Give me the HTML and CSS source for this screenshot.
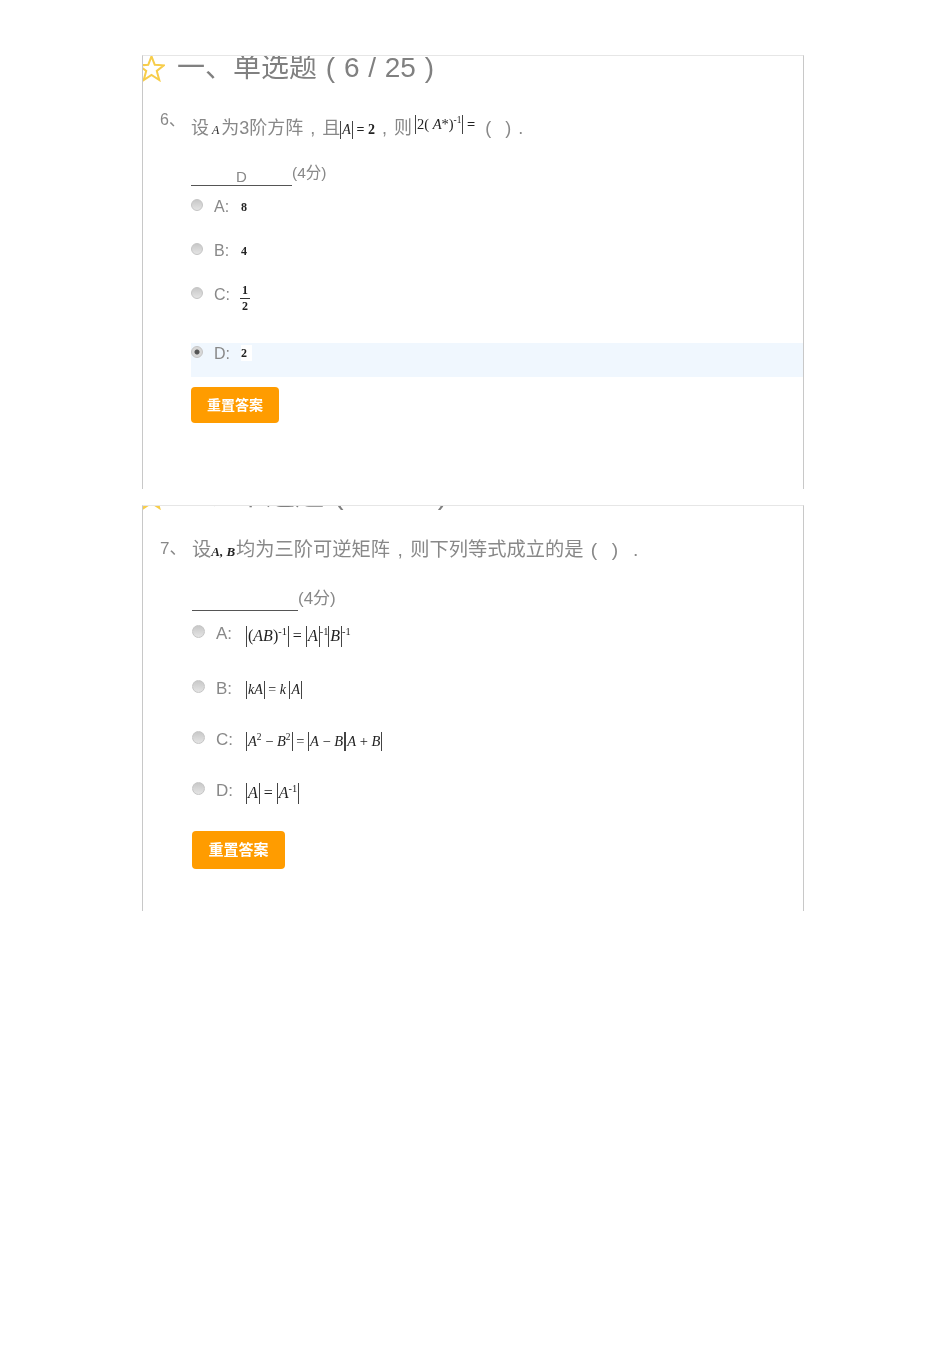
FILE: index.html
```html
<!DOCTYPE html>
<html lang="zh-CN">
<head>
    <meta charset="UTF-8">
    <title>单选题</title>
    <link rel="stylesheet" href="styles.css">
</head>
<body>
    <div class="page">
        <div class="panel first">
            <h2 class="title">
                <svg class="star" viewBox="0 0 24 24"><path d="M12 1.2l2.9 7.5 8.1.5-6.3 5 2.2 8-6.9-4.5-6.9 4.5 2.2-8-6.3-5 8.1-.5z"/></svg>
                <span>一、单选题 ( 6 / 25 )</span>
            </h2>
            <div class="question">
                <span class="num">6、</span>
                <p class="stem">设<i class="m a-var">A</i>为3阶方阵 , 且<span class="m formula"><span class="abs"><i>A</i></span> = 2</span> , 则<span class="m formula raised"><span class="abs">2( <i>A</i>*)<sup>-1</sup></span> =</span> ( &nbsp;) .</p>
            </div>
            <div class="answer"><span class="blank">D</span><span class="score">(4分)</span></div>
            <div class="options">
                <div class="option"><span class="radio"></span><span class="label">A:</span><span class="m value">8</span></div>
                <div class="option"><span class="radio"></span><span class="label">B:</span><span class="m value">4</span></div>
                <div class="option tall"><span class="radio"></span><span class="label">C:</span><span class="m frac"><span>1</span><span>2</span></span></div>
                <div class="option picked"><span class="radio on"></span><span class="label">D:</span><span class="m value white">2</span></div>
            </div>
            <button class="reset">重置答案</button>
        </div>

        <div class="panel second">
            <h2 class="title">
                <svg class="star" viewBox="0 0 24 24"><path d="M12 1.2l2.9 7.5 8.1.5-6.3 5 2.2 8-6.9-4.5-6.9 4.5 2.2-8-6.3-5 8.1-.5z"/></svg>
                <span>一、单选题 ( 7 / 25 )</span>
            </h2>
            <div class="question">
                <span class="num">7、</span>
                <p class="stem">设<i class="m vars">A, B</i>均为三阶可逆矩阵 , 则下列等式成立的是 ( &nbsp;) &nbsp;.</p>
            </div>
            <div class="answer"><span class="blank"></span><span class="score">(4分)</span></div>
            <div class="options">
                <div class="option"><span class="radio"></span><span class="label">A:</span><span class="m value big"><span class="abs">(<i>AB</i>)<sup>-1</sup></span> = <span class="abs"><i>A</i></span><sup>-1</sup><span class="abs"><i>B</i></span><sup>-1</sup></span></div>
                <div class="option"><span class="radio"></span><span class="label">B:</span><span class="m value"><span class="abs"><i>kA</i></span> = <i>k</i> <span class="abs"><i>A</i></span></span></div>
                <div class="option"><span class="radio"></span><span class="label">C:</span><span class="m value wide"><span class="abs"><i>A</i><sup>2</sup> − <i>B</i><sup>2</sup></span> = <span class="abs"><i>A</i> − <i>B</i></span><span class="abs"><i>A</i> + <i>B</i></span></span></div>
                <div class="option"><span class="radio"></span><span class="label">D:</span><span class="m value big"><span class="abs"><i>A</i></span> = <span class="abs"><i>A</i><sup>-1</sup></span></span></div>
            </div>
            <button class="reset">重置答案</button>
        </div>
    </div>
</body>
</html>
```

FILE: styles.css
```css
body {
    margin: 0;
    background: #fff;
    font-family: "Liberation Sans", "Noto Sans CJK SC", sans-serif;
    color: #888;
}
.page {
    width: 662px;
    margin-left: 142px;
    padding-top: 55px;
    height: 1290px;
}
.panel {
    box-sizing: border-box;
    overflow: hidden;
    border: 1px solid #c8c8c8;
    border-top-color: #e6e6e6;
    border-bottom: none;
    filter: blur(0.5px);
}
.first {
    height: 434px;
    margin-bottom: 16px;
}
.second {
    height: 406px;
}
.title {
    display: flex;
    align-items: center;
    gap: 12px;
    margin: -9px 0 0 -5px;
    height: 36px;
    font-size: 28px;
    font-weight: normal;
    word-spacing: 1px;
    color: #808080;
    white-space: nowrap;
}
.second .title {
    margin-top: -33px;
    font-size: 29.5px;
}
.star {
    width: 27px;
    height: 27px;
    margin-top: 6px;
    flex: none;
    fill: #fff;
    stroke: #f7cd4a;
    stroke-width: 1.8;
}
.second .star {
    align-self: flex-end;
    margin: 0 0 -1px;
}
.question {
    display: flex;
    margin: 25px 0 0 17px;
}
.num {
    width: 31px;
    font-size: 16px;
    line-height: 24px;
}
.stem {
    margin: 6px 0 0;
    font-size: 18px;
    line-height: 28px;
    word-spacing: 2px;
    white-space: nowrap;
}
.m {
    font-family: "Liberation Serif", serif;
    color: #222;
}
.a-var {
    margin: 0 2px 0 3px;
    font-size: 12px;
}
.formula {
    font-size: 14px;
    font-weight: bold;
    word-spacing: 0;
}
.raised {
    position: relative;
    top: -5px;
    margin: 0 3px;
    font-size: 14.5px;
}
.abs {
    display: inline-block;
    padding: 0 1px;
    border-left: 1px solid #444;
    border-right: 1px solid #444;
    line-height: 1.3;
    font-weight: normal;
}
sup {
    font-size: 0.65em;
    line-height: 0;
}
.answer {
    display: flex;
    align-items: flex-start;
    margin: 18px 0 0 48px;
}
.blank {
    box-sizing: border-box;
    width: 101px;
    height: 24px;
    padding-top: 6px;
    border-bottom: 1px solid #555;
    text-align: center;
    font-size: 15px;
    line-height: 18px;
}
.score {
    font-size: 15.5px;
    line-height: 21px;
}
.options {
    margin: 10px 0 0 48px;
}
.option {
    display: flex;
    align-items: flex-start;
    height: 44px;
    font-size: 16px;
    line-height: 20px;
}
.option.tall {
    height: 59px;
}
.option.picked {
    height: 34px;
    background: #f0f7fe;
}
.radio {
    box-sizing: border-box;
    flex: none;
    width: 12px;
    height: 12px;
    margin-top: 3px;
    border: 1px solid #c4c4c4;
    border-radius: 50%;
    background: linear-gradient(#c8c8c8, #e4e4e4);
}
.radio.on {
    background: radial-gradient(circle, #555 0 2px, #d8d8d8 3px);
}
.label {
    width: 27px;
    margin: 1px 0 0 11px;
}
.value {
    margin-top: 3px;
    font-size: 12px;
    line-height: 16px;
    font-weight: bold;
    white-space: nowrap;
}
.white {
    margin-top: 2px;
    padding: 0 5px 0 0;
    background: #fff;
}
.frac {
    display: inline-flex;
    flex-direction: column;
    margin: -1px 0 0 -1px;
    font-size: 12px;
    line-height: 15px;
    font-weight: bold;
    text-align: center;
}
.frac span {
    padding: 0 2px;
}
.frac span:first-child {
    border-bottom: 1px solid #333;
}
.reset {
    display: block;
    width: 88px;
    height: 36px;
    margin: 10px 0 0 48px;
    padding: 0 0 3px;
    border: none;
    border-radius: 4px;
    background: #ff9c00;
    color: #fff;
    font-family: inherit;
    font-size: 14px;
    font-weight: bold;
}

/* second screenshot is scaled up a little */
.second .question {
    margin-top: 21px;
}
.second .stem {
    margin-left: 1px;
    font-size: 19.25px;
}
.second .num {
    padding-top: 3px;
    font-size: 17px;
    line-height: 32px;
}
.vars {
    font-size: 13px;
    font-weight: bold;
    margin: 0 1px 0 0;
    word-spacing: 0;
}
.second .answer {
    margin: 21px 0 0 49px;
}
.second .blank {
    width: 106px;
}
.second .score {
    font-size: 17px;
    line-height: 24px;
}
.second .options {
    margin: 12px 0 0 49px;
}
.second .option {
    height: 51px;
    font-size: 17px;
}
.second .option:first-child {
    height: 55px;
}
.second .radio {
    width: 13px;
    height: 13px;
    margin-top: 2px;
}
.second .label {
    width: 30px;
}
.second .value {
    font-size: 14px;
    font-weight: normal;
    margin-top: 3px;
}
.second .value.wide {
    font-size: 14.5px;
}
.second .value.big {
    font-size: 16px;
}
.second .reset {
    width: 93px;
    height: 38px;
    margin: 0 0 0 49px;
    font-size: 15px;
}
```
